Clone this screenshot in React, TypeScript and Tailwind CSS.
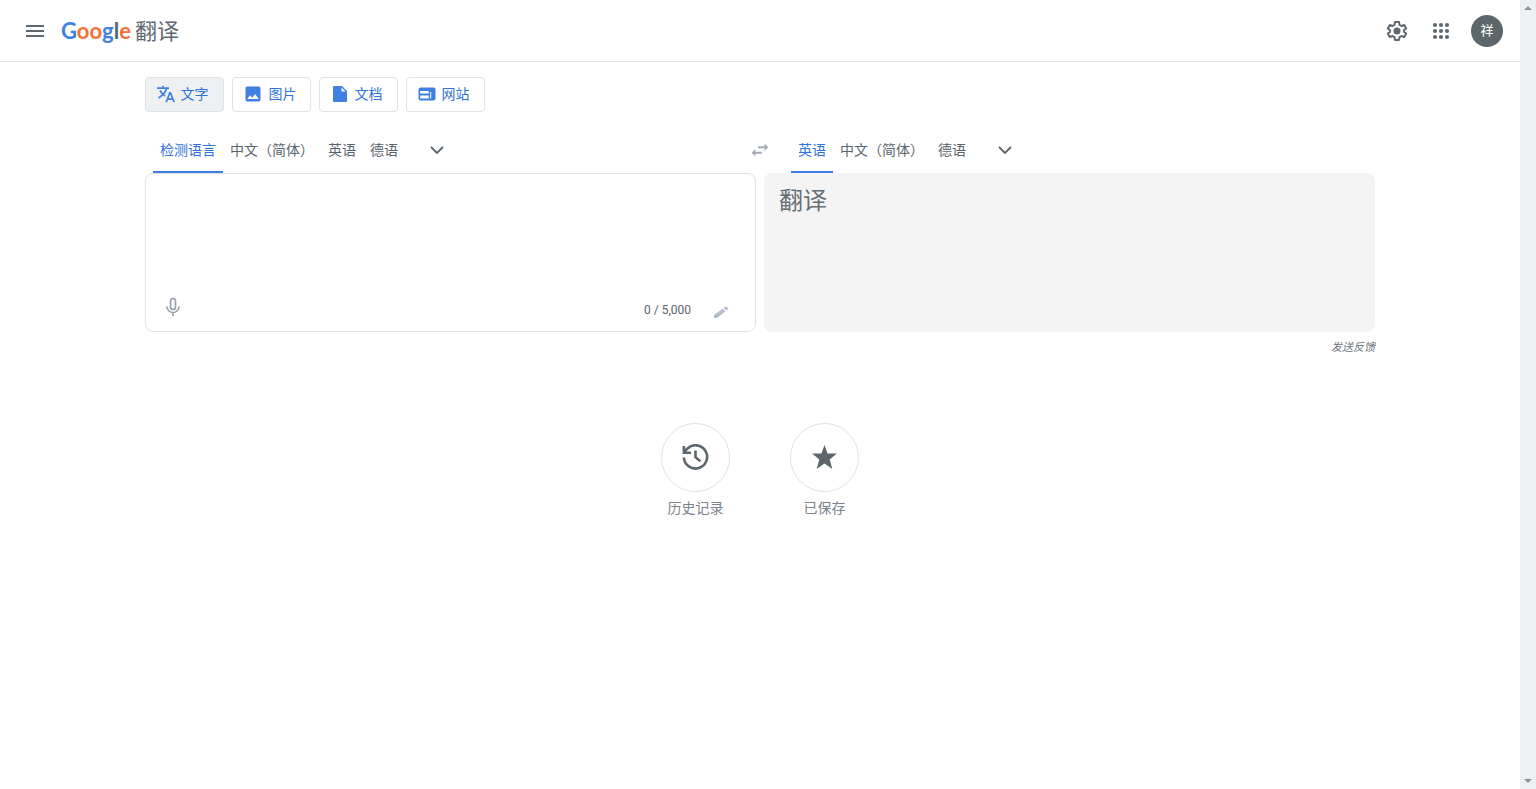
import { useState } from 'react'
import { MdImage, MdSwapHoriz } from 'react-icons/md'

const sourceLanguages = ['检测语言', '中文（简体）', '英语', '德语']
const targetLanguages = ['英语', '中文（简体）', '德语']

const modes = [
  { label: '文字', icon: <TranslateIcon /> },
  { label: '图片', icon: <MdImage className="w-5 h-5" /> },
  { label: '文档', icon: <DocumentIcon /> },
  { label: '网站', icon: <WebIcon /> },
]

function TranslateIcon() {
  return (
    <svg viewBox="0 0 18 18" className="w-[18px] h-[18px]" fill="none" stroke="currentColor" strokeWidth="1.7">
      <path d="M0 3.2h12M6 .8v2.400M9.600 3.200C8.800 7 5.500 10.500 1.500 13M3 5.500c1 2 3 4.200 5.200 5.500" />
      <path d="M9.200 17.200l3.600-9.400h.6l3.800 9.400M10.600 14.200h5.200" />
    </svg>
  )
}

function DocumentIcon() {
  return (
    <svg viewBox="0 0 18 18" className="w-[18px] h-[18px]" fill="currentColor">
      <path fillRule="evenodd" d="M3 1h8l5 5v10a1 1 0 0 1-1 1H3a1 1 0 0 1-1-1V2a1 1 0 0 1 1-1zm7.500 1.500v4h4z" />
    </svg>
  )
}

function WebIcon() {
  return (
    <svg viewBox="0 0 18 18" className="w-[18px] h-[18px]" fill="currentColor">
      <path
        fillRule="evenodd"
        d="M2.500 2.500h13a2 2 0 0 1 2 2v9a2 2 0 0 1-2 2h-13a2 2 0 0 1-2-2v-9a2 2 0 0 1 2-2zM2.200 6v2.600h8.500V6zM2.200 10.400v3.200h8.500v-3.200zM12.200 7v6.600h1V7z"
      />
    </svg>
  )
}

function MenuIcon() {
  return (
    <svg viewBox="0 0 24 24" className="w-6 h-6" fill="currentColor">
      <path d="M3 6h18v2H3zM3 11h18v2H3zM3 16h18v2H3z" />
    </svg>
  )
}

function AppsIcon() {
  return (
    <svg viewBox="0 0 24 24" className="w-6 h-6" fill="currentColor">
      {[6, 12, 18].map((y) => [6, 12, 18].map((x) => <circle key={`${x}-${y}`} cx={x} cy={y} r="2.100" />))}
    </svg>
  )
}

function GearIcon() {
  return (
    <svg viewBox="0 0 24 24" className="w-6 h-6" fill="none" stroke="currentColor" strokeWidth="2" strokeLinejoin="round">
      <path d="M10 3h4l.5 2.900 1.900 1.100 2.800-1 2 3.400-2.300 1.900v1.400l2.300 1.900-2 3.400-2.800-1-1.900 1.100L14 21h-4l-.5-2.900L7.600 17l-2.800 1-2-3.400 2.300-1.900v-1.400L2.800 9.400l2-3.400 2.800 1 1.900-1.100z" />
      <circle cx="12" cy="12" r="3.500" fill="currentColor" stroke="none" />
    </svg>
  )
}

function ChevronIcon() {
  return (
    <svg viewBox="0 0 14 8" className="w-3.5 h-2" fill="none" stroke="currentColor" strokeWidth="1.8">
      <path d="M1 1l6 6 6-6" />
    </svg>
  )
}

function MicIcon() {
  return (
    <svg viewBox="0 0 24 24" className="w-6 h-6" fill="none" stroke="currentColor" strokeWidth="1.7">
      <rect x="9.500" y="3.500" width="5" height="11" rx="2.500" />
      <path d="M6 11.500a6 6 0 0 0 12 0M12 17.500V21" />
    </svg>
  )
}

function PencilIcon() {
  return (
    <svg viewBox="0 0 16 14" className="w-4 h-3.5" fill="currentColor">
      <path d="M1 13v-3l8.500-6.300 3 2.600L4.200 13zM10.500 3l1.600-1.200q.7-.5 1.400 0l1.600 1.300q.6.500 0 1L13.500 5.500z" />
    </svg>
  )
}

function HistoryIcon() {
  return (
    <svg viewBox="0 0 24 24" className="w-[31px] h-[31px]" fill="none" stroke="currentColor" strokeWidth="2">
      <path d="M3 12A9 9 0 1 0 5.600 5.200L3.200 7.800M3 3v5.300h5.500" />
      <path d="M12 6.500v5.300l3.800 3.200" />
    </svg>
  )
}

function StarIcon() {
  return (
    <svg viewBox="0 0 24 24" className="w-[25px] h-[25px]" fill="currentColor">
      <path d="M12 0l2.900 8.200h9L17 13.800l2.500 9.200L12 17.800 4.500 23 7 13.800.1 8.200h9z" />
    </svg>
  )
}

function LanguageTabs({ languages, label }: { languages: string[]; label: string }) {
  const [selected, setSelected] = useState(0)

  return (
    <div className="flex h-[61px]">
      {languages.map((language, index) => (
        <button
          key={language}
          onClick={() => setSelected(index)}
          className={`h-full px-[7px] pt-7 pb-3 border-b-2 text-sm whitespace-nowrap ${
            index === selected ? 'text-[#2f73da] border-[#3b7de0]' : 'text-[#5a646c] border-transparent'
          }`}
        >
          {language}
        </button>
      ))}
      <button aria-label={label} className="ml-2.5 w-11 h-full pt-3.5 flex items-center justify-center text-[#5a646c]">
        <ChevronIcon />
      </button>
    </div>
  )
}

function Header() {
  return (
    <header className="h-[62px] flex items-center justify-between border-b border-[#dfe1e5] pl-[23px] pr-[17px]">
      <div className="flex items-center">
        <button aria-label="主菜单" className="text-[#5f686e]">
          <MenuIcon />
        </button>
        <a href="#" className="ml-3.5 flex items-center">
          <span className="font-[Lato] text-[22px] leading-8 font-bold text-[#f27338]">
            <span className="text-[#3f80e2]">G</span>oo<span className="text-[#3f80e2]">g</span>
            <span className="text-[#5a646c]">l</span>e
          </span>
          <span className="ml-1 pt-0.5 text-[22px] leading-8 text-[#606a72]">翻译</span>
        </a>
      </div>
      <div className="flex items-center text-[#5f686e]">
        <button aria-label="设置">
          <GearIcon />
        </button>
        <button aria-label="Google 应用" className="ml-5">
          <AppsIcon />
        </button>
        <button className="ml-[18px] w-8 h-8 rounded-full bg-[#5c666b] text-white text-[13px]">祥</button>
      </div>
    </header>
  )
}

function Scrollbar() {
  return (
    <div aria-hidden="true" className="w-4 shrink-0 flex flex-col items-center justify-between py-1.5 bg-[#eff0f3] text-[#8f9399]">
      <svg viewBox="0 0 8 4" className="w-2 h-1" fill="currentColor">
        <path d="M0 4l4-4 4 4z" />
      </svg>
      <svg viewBox="0 0 8 4" className="w-2 h-1" fill="currentColor">
        <path d="M0 0l4 4 4-4z" />
      </svg>
    </div>
  )
}

export default function App() {
  const [mode, setMode] = useState('文字')
  const [text, setText] = useState('')

  return (
    <div className="min-h-screen flex bg-white font-[Roboto,'Noto_Sans_CJK_SC',sans-serif]">
      <div className="flex-1 min-w-0">
        <Header />
        <main className="max-w-[1230px] mx-auto pt-[15px]">
          <nav className="flex gap-2">
            {modes.map(({ label, icon }) => (
              <button
                key={label}
                onClick={() => setMode(label)}
                className={`w-[79px] h-[35px] flex items-center justify-center gap-1.5 pr-1 pb-0.5 rounded border border-[#dfe1e5] text-sm text-[#2f73da] ${
                  mode === label ? 'bg-[#eff0f2]' : 'bg-white'
                }`}
              >
                <span className="text-[#3f80e2]">{icon}</span>
                {label}
              </button>
            ))}
          </nav>

          <div className="relative grid grid-cols-2 gap-2">
            <div className="pl-2">
              <LanguageTabs languages={sourceLanguages} label="更多源语言" />
            </div>
            <div className="pl-[27px]">
              <LanguageTabs languages={targetLanguages} label="更多目标语言" />
            </div>
            <button aria-label="交换语言" className="absolute left-1/2 top-[27px] -translate-x-1/2 text-[#a3a9b5]">
              <MdSwapHoriz className="w-[22px] h-[22px]" />
            </button>
          </div>

          <div className="grid grid-cols-2 gap-2">
            <div className="h-[159px] flex flex-col rounded-lg border border-[#dfe1e5]">
              <textarea
                aria-label="原文"
                maxLength={5000}
                value={text}
                onChange={(e) => setText(e.target.value)}
                className="flex-1 px-3.5 pt-2 text-2xl text-[#3c4043] resize-none outline-none"
              />
              <div className="h-12 flex items-center justify-between pl-[15px] pr-[26px]">
                <button aria-label="语音输入" className="text-[#9aa1ae]">
                  <MicIcon />
                </button>
                <div className="flex items-center gap-[22px] pt-1.5">
                  <span className="text-xs text-[#5a646c]">{text.length} / 5,000</span>
                  <button aria-label="手写输入" className="pt-1 text-[#b4bccd]">
                    <PencilIcon />
                  </button>
                </div>
              </div>
            </div>
            <div className="h-[159px] rounded-lg bg-[#f4f4f4] px-[15px] pt-2.5 text-2xl leading-9 text-[#646e76]">翻译</div>
          </div>

          <div className="flex justify-end pt-2">
            <a href="#" className="text-[11px] leading-4 italic text-[#6b737c]">发送反馈</a>
          </div>

          <div className="mt-[67px] flex justify-center gap-[60px] text-sm text-[#7a828c]">
            <button className="w-[69px] flex flex-col items-center gap-1.5">
              <span className="w-[69px] h-[69px] flex items-center justify-center rounded-full border border-[#dfe1e5] text-[#5c666b]">
                <HistoryIcon />
              </span>
              历史记录
            </button>
            <button className="w-[69px] flex flex-col items-center gap-1.5">
              <span className="w-[69px] h-[69px] flex items-center justify-center rounded-full border border-[#dfe1e5] text-[#5c666b]">
                <StarIcon />
              </span>
              已保存
            </button>
          </div>
        </main>
      </div>
      <Scrollbar />
    </div>
  )
}
